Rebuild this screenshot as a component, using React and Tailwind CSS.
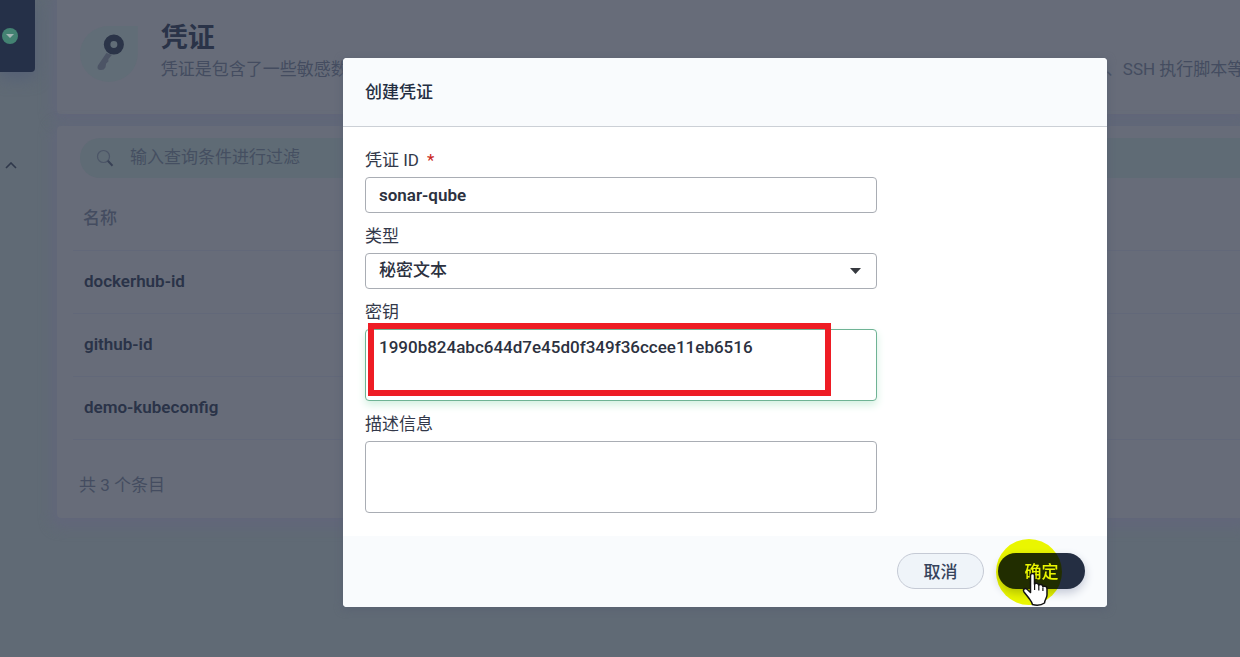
import React from "react";

const credentials = ["dockerhub-id", "github-id", "demo-kubeconfig"];

const fieldClass =
  "block w-full rounded-[4px] border border-[#a9adb4] bg-white px-[13px] text-[17px] text-[#2c3140] outline-none";

function KeyIcon() {
  return (
    <svg className="h-14 w-[58px]" viewBox="0 0 58 56" aria-hidden="true">
      <path d="M29 0H58V28A29 28 0 1 1 29 0Z" fill="#616d77" />
      <path
        d="M26.500 27 18 39.500Q16.500 43.500 20 44Q24 44.500 25.500 41.500L26.300 37.500 28.500 35.500 28.500 33 32 29Z"
        fill="#4c5465"
      />
      <circle cx="34" cy="18.500" r="6.800" fill="none" stroke="#2b3448" strokeWidth="6.600" />
    </svg>
  );
}

function SearchIcon() {
  return (
    <svg className="size-[18px] shrink-0" viewBox="0 0 18 18" fill="none" aria-hidden="true">
      <circle cx="7.500" cy="7.500" r="6" stroke="#4c5567" strokeWidth="1.200" />
      <path d="M11.800 11.800 16.500 16.800" stroke="#384155" strokeWidth="2" />
    </svg>
  );
}

function HandCursor() {
  return (
    <svg
      className="pointer-events-none absolute top-[19px] left-[24px] h-[35px] w-[27px]"
      viewBox="0 0 27 35"
      aria-hidden="true"
    >
      <path
        d="M8.500 3.500C8.500 .8 12.500 .8 12.500 3.500V12.200C13.300 10.500 16.500 11 16.800 13.300C18 11.800 20.600 12.400 20.900 14.600C22.500 13.600 25 14.400 25 17V23C25 26 22.500 28 22.500 31Q18 34.200 10.500 32.600C10 29.500 8 28 6 25L2.200 20.200C.3 17.500 2.800 15.600 5 17.200L8.500 20.500Z"
        fill="#fff"
        stroke="#111"
        strokeWidth="1.500"
        strokeLinejoin="round"
      />
      <path d="M12.600 12V18M16.800 14V18.500M20.900 15.500V19" stroke="#111" strokeWidth="1.200" />
    </svg>
  );
}

function Sidebar() {
  return (
    <aside className="w-[57px] shrink-0">
      <div className="flex h-[72px] w-[35px] items-center rounded-br-[4px] bg-[#253048] pl-0.5 shadow-[0_6px_16px_#556076]">
        <button aria-label="切换" className="flex size-4 items-center justify-center rounded-full bg-[#438272]">
          <svg className="h-1 w-2" viewBox="0 0 8 4" aria-hidden="true">
            <path d="M0 0H8L4 4Z" fill="#a3b5b4" />
          </svg>
        </button>
      </div>
      <button aria-label="收起" className="mt-[84px] flex h-[18px] w-[22px] items-center justify-center">
        <svg className="h-[7px] w-3" viewBox="0 0 12 7" fill="none" aria-hidden="true">
          <path d="M1 6 6 1 11 6" stroke="#2f384b" strokeWidth="1.600" />
        </svg>
      </button>
    </aside>
  );
}

function CredentialPage() {
  return (
    <main className="min-w-0 flex-1">
      <header className="flex h-[114px] items-start overflow-hidden rounded-bl-[4px] bg-[#676c79] pt-[26px] pl-[23px] shadow-[0_2px_12px_6px_#62677a]">
        <KeyIcon />
        <div className="-mt-[5px] ml-[23px] min-w-0">
          <h1 className="text-[27px] leading-[34px] font-bold text-[#2a3348]">凭证</h1>
          <p className="text-[17px] leading-[28px] whitespace-nowrap text-[#444c60]">
            凭证是包含了一些敏感数据的对象，例如用户名密码， SSH 密钥和 Token 等，用于在流水线运行时，为拉取代码、推送镜像包、SSH 执行脚本等
          </p>
        </div>
      </header>
      <section className="mt-3 rounded-l-[4px] bg-[#676c79] pt-3 shadow-[0_4px_12px_6px_#62677a]">
        <label className="ml-[23px] flex h-10 items-center gap-4 rounded-l-full bg-[#5f6b75] pl-4">
          <SearchIcon />
          <input
            aria-label="搜索"
            placeholder="输入查询条件进行过滤"
            className="min-w-0 flex-1 bg-transparent text-[17px] text-[#2a3348] outline-none placeholder:text-[#454f61]"
          />
        </label>
        <div className="mt-1.5 pl-4">
          <table className="w-full text-left text-[17px]">
            <thead>
              <tr className="h-[66px] border-b border-[#626879]">
                <th className="pt-1 pl-2.5 font-medium text-[#444c60]">名称</th>
              </tr>
            </thead>
            <tbody>
              {credentials.map((name) => (
                <tr key={name} className="h-[63px] border-b border-[#626879]">
                  <td className="pl-[11px] font-semibold text-[#2a3348]">{name}</td>
                </tr>
              ))}
            </tbody>
          </table>
        </div>
        <p className="h-[78px] pt-[33px] pl-[22px] text-[17px] leading-6 text-[#444c60]">共 3 个条目</p>
      </section>
    </main>
  );
}

function Field({ id, label, required, children }) {
  return (
    <div className="mb-3">
      <label htmlFor={id} className="mb-1.5 block text-[17px] leading-[22px] text-[#33394a]">
        {label}
        {required && <span className="ml-2 text-[#ca2621]">*</span>}
      </label>
      {children}
    </div>
  );
}

function CreateDialog() {
  return (
    <div
      role="dialog"
      aria-labelledby="dialog-title"
      className="w-full max-w-[764px] rounded-[4px] bg-white shadow-[0_2px_8px_#596172]"
    >
      <header className="rounded-t-[4px] border-b border-[#ccd0d6] bg-[#f9fbfd] px-[22px] py-[22px]">
        <h2 id="dialog-title" className="text-[17px] leading-6 font-medium text-[#242e42]">
          创建凭证
        </h2>
      </header>
      <div className="px-[22px] pt-[22px] pb-[11px]">
        <div className="max-w-[512px]">
          <Field id="cred-id" label="凭证 ID" required>
            <input id="cred-id" defaultValue="sonar-qube" className={`${fieldClass} h-9 font-semibold`} />
          </Field>
          <Field id="cred-type" label="类型">
            <div className="relative">
              <select id="cred-type" className={`${fieldClass} h-9 appearance-none font-medium`}>
                <option>秘密文本</option>
              </select>
              <svg
                className="pointer-events-none absolute top-[15px] right-4 h-1.5 w-[11px]"
                viewBox="0 0 11 6"
                aria-hidden="true"
              >
                <path d="M0 0H11L5.500 6Z" fill="#36393f" />
              </svg>
            </div>
          </Field>
          <Field id="cred-secret" label="密钥">
            <div className="relative">
              <textarea
                id="cred-secret"
                defaultValue="1990b824abc644d7e45d0f349f36ccee11eb6516"
                className="block h-[72px] w-full resize-none rounded-[4px] border border-[#6fb395] bg-white px-[13px] py-[5px] text-[17px] leading-6 font-medium text-[#2c3140] shadow-[0_4px_8px_#d3f0e1] outline-none"
              />
              <div className="pointer-events-none absolute -top-1.5 right-[46px] bottom-[5px] left-[3px] border-[6px] border-[#ee1c24]" />
            </div>
          </Field>
          <Field id="cred-desc" label="描述信息">
            <textarea id="cred-desc" className={`${fieldClass} h-[72px] resize-none py-[5px]`} />
          </Field>
        </div>
      </div>
      <footer className="flex justify-end gap-3.5 rounded-b-[4px] bg-[#f9fbfd] px-[22px] pt-[17px] pb-[18px]">
        <button className="h-9 w-[87px] rounded-full border border-[#c5cad5] bg-[#eff4f9] pt-1 text-[17px] font-medium text-[#36435c]">
          取消
        </button>
        <div className="relative isolate">
          <button className="h-9 w-[87px] rounded-full bg-[#242e42] pt-1 text-[17px] font-medium text-white shadow-[0_4px_10px_#c3c8d6]">
            确定
          </button>
          <div className="pointer-events-none absolute -top-3.5 -left-0.5 size-[66px] rounded-full bg-[#eaf600] mix-blend-multiply" />
          <HandCursor />
        </div>
      </footer>
    </div>
  );
}

export default function App() {
  return (
    <div className="relative min-h-screen overflow-hidden bg-[#606a75] font-[Roboto,'Noto_Sans_CJK_SC',sans-serif]">
      <div className="flex">
        <Sidebar />
        <CredentialPage />
      </div>
      <div className="absolute inset-0 flex items-start justify-center pt-[58px] pl-[210px]">
        <CreateDialog />
      </div>
    </div>
  );
}
